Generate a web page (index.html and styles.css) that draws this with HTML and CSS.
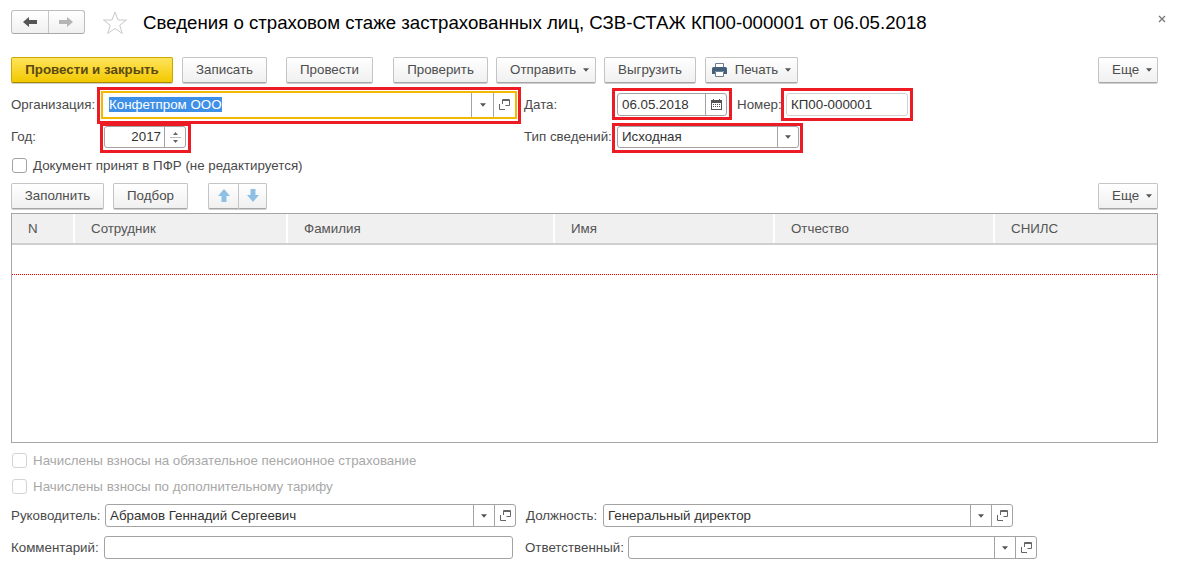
FILE: index.html
```html
<!DOCTYPE html>
<html lang="ru">
<head>
    <meta charset="UTF-8">
    <meta name="viewport" content="width=device-width, initial-scale=1.0">
    <title>Сведения о страховом стаже</title>
    <link rel="stylesheet" href="styles.css">
</head>
<body>
    <svg class="defs" width="0" height="0">
        <symbol id="i-caret" viewBox="0 0 7 4"><path d="M0 0h7L3.5 4z"/></symbol>
        <symbol id="i-open" viewBox="0 0 11 11"><path d="M3.500 5V.5h7v6H6.500M.5 5v5.500H6" fill="none" stroke="#666"/><path d="M3.500 1.500h7" stroke="#666" fill="none"/></symbol>
    </svg>

    <div class="titlebar">
        <div class="nav">
            <span class="nav-btn"><svg width="14" height="10" viewBox="0 0 14 10"><path d="M0 5l6-5v3h8v4H6v3z" fill="#555"/></svg></span>
            <span class="nav-btn"><svg width="14" height="10" viewBox="0 0 14 10"><path d="M14 5L8 0v3H0v4h8v3z" fill="#b5b5b5"/></svg></span>
        </div>
        <svg class="star" width="24" height="24" viewBox="0 0 24 24"><path d="M12 1l3 8h8.500l-6.800 5.200 2.600 8.300L12 17.500 4.700 22.500l2.600-8.300L.5 9H9z" fill="#fff" stroke="#c9c9c9"/></svg>
        <h1>Сведения о страховом стаже застрахованных лиц, СЗВ-СТАЖ КП00-000001 от 06.05.2018</h1>
        <svg class="close" width="8" height="8" viewBox="0 0 8 8"><path d="M1 1l6 6M7 1L1 7" stroke="#777" stroke-width="1.300"/></svg>
    </div>

    <div class="toolbar">
        <button class="btn btn-main w-post-close">Провести и закрыть</button>
        <button class="btn w-save">Записать</button>
        <button class="btn w-post">Провести</button>
        <button class="btn w-check">Проверить</button>
        <button class="btn w-send">Отправить <svg class="caret"><use href="#i-caret"/></svg></button>
        <button class="btn w-export">Выгрузить</button>
        <button class="btn w-print">
            <svg class="printer" width="15" height="14" viewBox="0 0 15 14"><path d="M3.500 .5h8v4h-8z" fill="#fff" stroke="#6d7f90"/><path d="M1.500 4h12A1.500 1.500 0 0 1 15 5.500V11h-3V8H3v3H0V5.500A1.500 1.500 0 0 1 1.500 4z" fill="#44617b"/><path d="M3.500 8.500h8v5h-8z" fill="#fff" stroke="#6d7f90"/></svg>
            Печать <svg class="caret"><use href="#i-caret"/></svg>
        </button>
        <button class="btn btn-more">Еще <svg class="caret"><use href="#i-caret"/></svg></button>
    </div>

    <div class="form-row row-org">
        <label class="lbl lbl-org">Организация:</label>
        <div class="field field-focus f-org">
            <span class="val"><span class="selected">Конфетпром ООО</span></span>
            <span class="fbtn"><svg class="caret"><use href="#i-caret"/></svg></span>
            <span class="fbtn"><svg class="open"><use href="#i-open"/></svg></span>
            <i class="mark mark-org"></i>
        </div>
        <label class="lbl lbl-date">Дата:</label>
        <div class="field f-date">
            <span class="val">06.05.2018</span>
            <span class="fbtn">
                <svg width="11" height="11" viewBox="0 0 11 11"><path d="M0 1h2V0h1v1h5V0h1v1h2v10H0z" fill="#555"/><path d="M1 4h9v6H1z" fill="#fff"/><path d="M2 5h1v1H2zM4 5h1v1H4zM6 5h1v1H6zM8 5h1v1H8zM2 7h1v1H2zM4 7h1v1H4zM6 7h1v1H6zM8 7h1v1H8z" fill="#555"/></svg>
            </span>
            <i class="mark mark-date"></i>
        </div>
        <label class="lbl lbl-num">Номер:</label>
        <div class="field field-light f-num">
            <span class="val">КП00-000001</span>
            <i class="mark mark-num"></i>
        </div>
    </div>

    <div class="form-row row-year">
        <label class="lbl lbl-year">Год:</label>
        <div class="field f-year">
            <span class="val val-right">2017</span>
            <span class="spin">
                <svg width="5" height="3" viewBox="0 0 5 3"><path d="M0 3h5L2.500 0z" fill="#666"/></svg>
                <b></b>
                <svg width="5" height="3" viewBox="0 0 5 3"><path d="M0 0h5L2.500 3z" fill="#666"/></svg>
            </span>
            <i class="mark mark-year"></i>
        </div>
        <label class="lbl lbl-type">Тип сведений:</label>
        <div class="field f-type">
            <span class="val">Исходная</span>
            <span class="fbtn"><svg class="caret"><use href="#i-caret"/></svg></span>
            <i class="mark mark-type"></i>
        </div>
    </div>

    <label class="check check-top"><span class="box"></span>Документ принят в ПФР (не редактируется)</label>

    <div class="toolbar toolbar-table">
        <button class="btn w-fill">Заполнить</button>
        <button class="btn w-pick">Подбор</button>
        <div class="btn-group">
            <button class="btn w-arrow"><svg width="12" height="13" viewBox="0 0 12 13"><path d="M6 0l6 7H8.500v6h-5V7H0z" fill="#8dc0e4"/></svg></button>
            <button class="btn w-arrow"><svg width="12" height="13" viewBox="0 0 12 13"><path d="M6 13l6-7H8.500V0h-5v6H0z" fill="#8dc0e4"/></svg></button>
        </div>
        <button class="btn btn-more">Еще <svg class="caret"><use href="#i-caret"/></svg></button>
    </div>

    <div class="table">
        <div class="thead">
            <div class="th th-n">N</div>
            <div class="th th-emp">Сотрудник</div>
            <div class="th th-last">Фамилия</div>
            <div class="th th-first">Имя</div>
            <div class="th th-mid">Отчество</div>
            <div class="th th-snils">СНИЛС</div>
        </div>
        <div class="empty-row"></div>
    </div>

    <label class="check check-off check-first"><span class="box"></span>Начислены взносы на обязательное пенсионное страхование</label>
    <label class="check check-off check-second"><span class="box"></span>Начислены взносы по дополнительному тарифу</label>

    <div class="form-row row-boss">
        <label class="lbl lbl-boss">Руководитель:</label>
        <div class="field f-boss">
            <span class="val">Абрамов Геннадий Сергеевич</span>
            <span class="fbtn"><svg class="caret"><use href="#i-caret"/></svg></span>
            <span class="fbtn"><svg class="open"><use href="#i-open"/></svg></span>
        </div>
        <label class="lbl lbl-pos">Должность:</label>
        <div class="field f-pos">
            <span class="val">Генеральный директор</span>
            <span class="fbtn"><svg class="caret"><use href="#i-caret"/></svg></span>
            <span class="fbtn"><svg class="open"><use href="#i-open"/></svg></span>
        </div>
    </div>

    <div class="form-row row-comment">
        <label class="lbl lbl-comment">Комментарий:</label>
        <div class="field f-comment"><span class="val"></span></div>
        <label class="lbl lbl-resp">Ответственный:</label>
        <div class="field f-resp">
            <span class="val"></span>
            <span class="fbtn"><svg class="caret"><use href="#i-caret"/></svg></span>
            <span class="fbtn"><svg class="open"><use href="#i-open"/></svg></span>
        </div>
    </div>
</body>
</html>
```

FILE: styles.css
```css
* {
    box-sizing: border-box;
}
body {
    margin: 0;
    padding: 0 21px 0 11px;
    font-family: "Liberation Sans", Arial, sans-serif;
    font-size: 13.33px;
    color: #4a4a4a;
    background: #fff;
    overflow: hidden;
}
.defs {
    position: absolute;
}

/* title */
.titlebar {
    display: flex;
    align-items: flex-start;
    height: 57px;
    padding-top: 10px;
    position: relative;
}
.nav {
    display: flex;
    width: 74px;
    height: 24px;
    border: 1px solid #bdbdbd;
    border-bottom-color: #a8a8a8;
    border-radius: 3px;
    background: linear-gradient(#fff, #f0f0f0);
}
.nav-btn {
    flex: 1;
    display: flex;
    align-items: center;
    justify-content: center;
}
.nav-btn + .nav-btn {
    border-left: 1px solid #c6c6c6;
}
.star {
    margin: 1px 0 0 18px;
}
h1 {
    margin: 2px 0 0 16px;
    font-size: 18.67px;
    font-weight: normal;
    line-height: 22px;
    color: #000;
    white-space: nowrap;
}
.close {
    position: absolute;
    top: 15px;
    right: -8px;
}

/* buttons */
.toolbar {
    display: flex;
    height: 26px;
}
.toolbar-table {
    margin-top: 10px;
}
.btn {
    height: 26px;
    padding: 0 0 2px;
    border: 1px solid #c4c4c4;
    border-bottom-color: #a6a6a6;
    border-radius: 2px;
    background: linear-gradient(#fff, #f0f0f0);
    box-shadow: 0 1px 0 #cfcfcf;
    font: 13.33px "Liberation Sans", Arial, sans-serif;
    color: #4d4d4d;
    white-space: nowrap;
}
.btn-main {
    border-color: #c9a800 #c9a800 #a68a00;
    background: linear-gradient(#ffe45c, #f2c800);
    font-weight: bold;
    color: #5b4a10;
}
.btn-more {
    width: 60px;
    margin-left: auto;
    padding-left: 8px;
}
.caret {
    width: 6px;
    height: 4px;
    margin-left: 3px;
    vertical-align: 2px;
    fill: #555;
}
.printer {
    margin-right: 4px;
    vertical-align: -3px;
}
.w-post-close { width: 162px; }
.w-save { width: 85px; margin-left: 9px; }
.w-post { width: 87px; margin-left: 19px; }
.w-check { width: 95px; margin-left: 20px; }
.w-send { width: 100px; margin-left: 8px; padding-left: 7px; }
.w-export { width: 92px; margin-left: 8px; }
.w-print { width: 93px; margin-left: 9px; }
.w-fill { width: 93px; }
.w-pick { width: 75px; margin-left: 9px; }
.btn-group {
    display: flex;
    margin-left: 20px;
}
.w-arrow {
    width: 30px;
    padding: 2px 0 0;
}
.w-arrow:first-child {
    border-radius: 2px 0 0 2px;
    border-right: 0;
}
.w-arrow:last-child {
    width: 29px;
    border-radius: 0 2px 2px 0;
}

/* form fields */
.form-row {
    display: flex;
    align-items: center;
    margin-top: 10px;
}
.row-org { height: 23px; }
.row-year { height: 22px; }
.row-boss { height: 23px; margin-top: 10px; }
.row-comment { height: 23px; margin-top: 9px; }
.lbl {
    white-space: nowrap;
}
.row-year .lbl {
    padding-bottom: 2px;
}
.lbl-org { width: 90px; }
.lbl-date { width: 93px; margin-left: 7px; }
.lbl-num { width: 49px; margin-left: 10px; }
.lbl-year { width: 93px; }
.lbl-type { width: 93px; margin-left: 338px; }
.lbl-boss { width: 94px; }
.lbl-pos { width: 77px; margin-left: 10px; }
.lbl-comment { width: 93px; }
.lbl-resp { width: 103px; margin-left: 12px; }
.field {
    position: relative;
    display: flex;
    height: 100%;
    border: 1px solid #a3a3a3;
    border-radius: 3px;
    background: #fff;
}
.field-light {
    border-color: #d2d2d2;
}
.field-focus {
    height: 28px;
    margin: -3px 0;
    border: 2px solid #f5b800;
    border-radius: 0;
}
.val {
    flex: 1;
    min-width: 0;
    padding: 0 4px;
    line-height: 21px;
    color: #333;
    white-space: nowrap;
}
.row-year .val {
    line-height: 19px;
}
.val-right {
    text-align: right;
    padding: 0 3px 0 0;
}
.field-focus .val {
    padding-left: 6px;
    line-height: 24px;
}
.selected {
    background: #3d8fe8;
    color: #fff;
}
.fbtn {
    display: flex;
    align-items: center;
    justify-content: center;
    width: 21px;
    border-left: 1px solid #a3a3a3;
}
.field-focus .fbtn {
    width: 22px;
}
.fbtn .caret {
    margin: 0;
}
.open {
    width: 11px;
    height: 11px;
}
.spin {
    display: flex;
    flex-direction: column;
    align-items: center;
    justify-content: center;
    gap: 2px;
    width: 21px;
    border-left: 1px solid #a3a3a3;
}
.spin b {
    display: block;
    width: 11px;
    height: 1px;
    background: #bbb;
}
.f-org { width: 416px; }
.f-date { width: 110px; }
.f-num { width: 122px; }
.f-year { width: 82px; }
.f-type { width: 182px; }
.f-boss { width: 411px; }
.f-pos { width: 410px; }
.f-comment { width: 409px; }
.f-resp { width: 409px; }

/* red marks drawn over the screenshot */
.mark {
    position: absolute;
    border: 3px solid #ed1c24;
    pointer-events: none;
}
.mark-org { inset: -6px -6px -7px -6px; }
.mark-date { inset: -6px -6px -5px -6px; }
.mark-num { inset: -6px -6px -6px -6px; }
.mark-year { inset: -4px -6px -6px -5px; }
.mark-type { inset: -4px -5px -6px -6px; }

/* checkboxes */
.check {
    display: flex;
    align-items: center;
    height: 15px;
    margin-top: 10px;
    white-space: nowrap;
}
.box {
    width: 15px;
    height: 15px;
    margin: 0 6px 0 1px;
    border: 1px solid #a3a3a3;
    border-radius: 3px;
    background: #fff;
}
.check-off {
    color: #a8a8a8;
}
.check-off .box {
    border-color: #d4d4d4;
}
.check-second {
    margin-top: 11px;
}

/* table */
.table {
    height: 230px;
    margin-top: 4px;
    border: 1px solid #a6a6a6;
}
.thead {
    display: flex;
    height: 31px;
    border-bottom: 2px solid #cfcfcf;
    background: #f0f0f0;
}
.th {
    line-height: 29px;
    padding-left: 16px;
    border-right: 2px solid #fff;
    color: #555;
}
.th-n { width: 63px; }
.th-emp { width: 213px; }
.th-last { width: 267px; }
.th-first { width: 220px; }
.th-mid { width: 220px; }
.th-snils { flex: 1; border-right: 0; }
.empty-row {
    height: 30px;
    border-bottom: 1px dotted #f00;
}
```
